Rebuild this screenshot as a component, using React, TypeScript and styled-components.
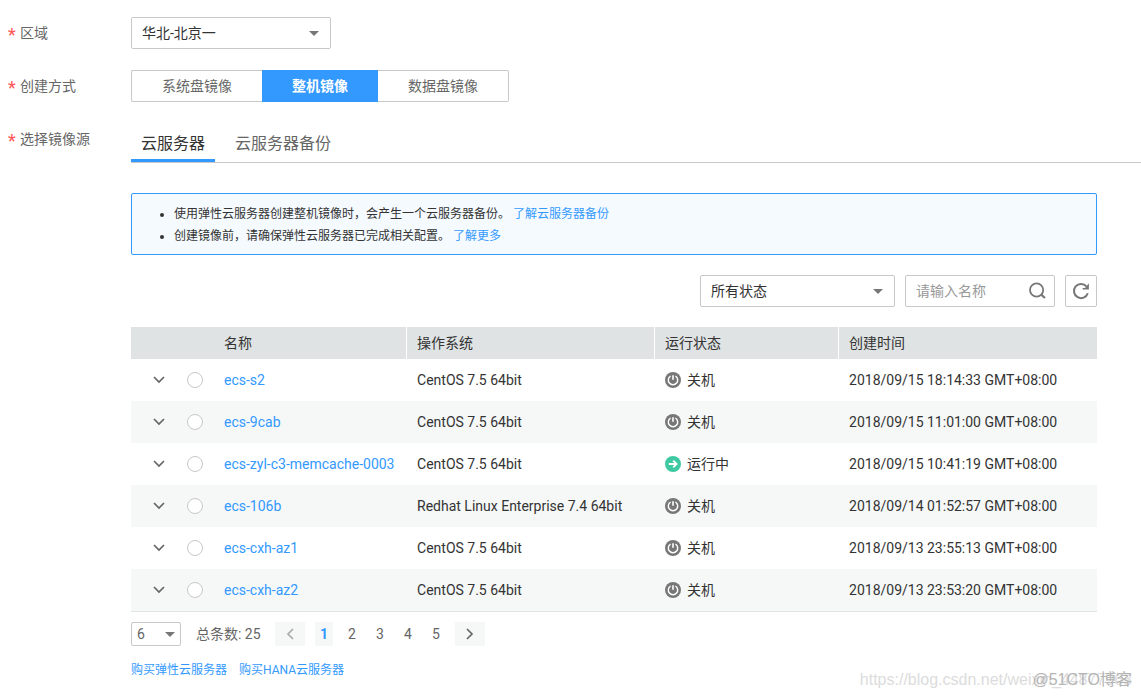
import React from "react";
import styled, { createGlobalStyle, css } from "styled-components";

const blue = "#3399ff";
const line = "#c8c8c8";

const GlobalStyle = createGlobalStyle`
  *, *::before, *::after { box-sizing: border-box; }
  body {
    margin: 0;
    background: #fff;
    color: #333;
    font-family: Roboto, "Noto Sans CJK SC", sans-serif;
    font-size: 14px;
    line-height: 20px;
  }
  button, input, select { font: inherit; color: inherit; margin: 0; }
  button { cursor: pointer; }
`;

const Page = styled.main`
  position: relative;
  display: flex;
  flex-direction: column;
  padding: 17px 0 18px 8px;
  overflow: hidden;
`;

const FormRow = styled.div<{ $gap?: number }>`
  display: grid;
  grid-template-columns: 123px minmax(0, 1fr);
  margin-bottom: ${(p) => p.$gap ?? 0}px;
`;

const labelStyle = css`
  display: flex;
  height: 32px;
  line-height: 32px;
  color: #666;
`;

const Label = styled.label`
  ${labelStyle}
`;

const GroupLabel = styled.span`
  ${labelStyle}
`;

const Star = styled.span`
  width: 12px;
  padding-top: 2px;
  font-size: 18px;
  color: #f55;
`;

const SelectBox = styled.div<{ $width: number; $small?: boolean }>`
  position: relative;
  width: ${(p) => p.$width}px;
  height: ${(p) => (p.$small ? 24 : 32)}px;
  color: ${(p) => (p.$small ? "#666" : "#333")};

  select {
    width: 100%;
    height: 100%;
    padding: 0 ${(p) => (p.$small ? 5 : 10)}px;
    border: 1px solid ${line};
    border-radius: 2px;
    background: #fff;
    appearance: none;
  }

  svg {
    position: absolute;
    top: 50%;
    right: ${(p) => (p.$small ? 6 : 12)}px;
    margin-top: -2px;
    pointer-events: none;
  }
`;

const Segments = styled.div`
  display: flex;
`;

const Segment = styled.button<{ $active?: boolean }>`
  height: 32px;
  padding: 0 30px;
  border: 1px solid ${line};
  border-radius: 0;
  background: #fff;
  color: #666;

  &:first-child { border-right: 0; border-radius: 2px 0 0 2px; }
  &:last-child { border-left: 0; border-radius: 0 2px 2px 0; }

  ${(p) =>
    p.$active &&
    css`
      border-width: 1px 0;
      border-color: ${blue};
      background: ${blue};
      color: #fff;
      font-weight: 700;
    `}
`;

const Source = styled.div`
  padding-top: 3px;
`;

const Tabs = styled.div`
  display: flex;
  gap: 10px;
  border-bottom: 1px solid ${line};
`;

const Tab = styled.button<{ $active?: boolean }>`
  height: 36px;
  padding: 2px 10px 0;
  border: 0;
  border-bottom: 3px solid ${(p) => (p.$active ? blue : "transparent")};
  background: none;
  color: ${(p) => (p.$active ? "#333" : "#666")};
  font-size: 16px;
  line-height: 31px;
`;

const Body = styled.div`
  padding: 30px 44px 0 0;
`;

const Notice = styled.ul`
  margin: 0 0 20px;
  padding: 9px 20px 7px 42px;
  border: 1px solid ${blue};
  border-radius: 2px;
  background: #f5faff;
  font-size: 12px;
  line-height: 22px;
`;

const Link = styled.a`
  color: ${blue};
  text-decoration: none;
`;

const NoticeLink = styled(Link)`
  margin-left: 3px;
`;

const Toolbar = styled.div`
  display: flex;
  justify-content: flex-end;
  gap: 10px;
  margin-bottom: 20px;
`;

const Search = styled.form`
  display: flex;
  align-items: center;
  width: 150px;
  height: 32px;
  padding: 0 8px 0 10px;
  border: 1px solid ${line};
  border-radius: 2px;

  input {
    flex: 1;
    min-width: 0;
    padding: 0;
    border: 0;
    outline: 0;
    background: none;
  }
  input::placeholder { color: #999; opacity: 1; }
`;

const IconButton = styled.button`
  display: flex;
  align-items: center;
  justify-content: center;
  padding: 0;
  border: 0;
  background: none;
`;

const RefreshButton = styled(IconButton)`
  width: 32px;
  height: 32px;
  border: 1px solid ${line};
  border-radius: 2px;
`;

const Table = styled.table`
  width: 100%;
  table-layout: fixed;
  border-collapse: separate;
  border-spacing: 0;
  border-bottom: 1px solid #dfe3e3;
  white-space: nowrap;

  th, td { padding: 0 0 0 10px; text-align: left; font-weight: 400; }
  th { height: 32px; background: #dfe3e3; }
  th:not(:last-child) { border-right: 1px solid #fff; }
  th:first-child { padding-left: 93px; }
  td { height: 42px; }
  td:nth-child(-n + 2) { padding: 0; }
  tbody tr:nth-child(even) { background: #f6f8f8; }
`;

const Col = styled.col<{ $width?: number }>`
  width: ${(p) => (p.$width ? `${p.$width}px` : "auto")};
`;

const Expand = styled(IconButton)`
  width: 100%;
  height: 24px;
  color: #666;
`;

const Radio = styled.input`
  display: block;
  width: 16px;
  height: 16px;
  border: 1px solid ${line};
  border-radius: 50%;
  background: #fff;
  appearance: none;

  &:checked { border: 5px solid ${blue}; }
`;

const Status = styled.span`
  display: flex;
  align-items: center;
  gap: 6px;
`;

const Pager = styled.nav`
  display: flex;
  align-items: center;
  gap: 10px;
  margin: 10px 0 14px;
  color: #666;
`;

const Total = styled.span`
  width: 74px;
  padding-left: 5px;
  white-space: nowrap;
`;

const PageButton = styled.button<{ $active?: boolean; $arrow?: boolean }>`
  display: flex;
  align-items: center;
  justify-content: center;
  width: ${(p) => (p.$arrow ? 30 : 18)}px;
  height: 24px;
  padding: 0;
  border: 0;
  background: ${(p) => (p.$active || p.$arrow ? "#f6f8f8" : "none")};
  color: ${(p) => (p.$active ? blue : "#666")};
  font-weight: ${(p) => (p.$active ? 700 : 400)};

  &:disabled { color: #aaa; }
`;

const Links = styled.div`
  display: flex;
  gap: 12px;
  font-size: 12px;
`;

const Watermark = styled.span<{ $front?: boolean }>`
  position: absolute;
  right: 9px;
  bottom: 8px;
  color: ${(p) => (p.$front ? "#b4b4b4" : "#dcdcdc")};
  font-size: 16px;
  line-height: 20px;
  font-family: "Liberation Sans", "Noto Sans CJK SC", sans-serif;
  pointer-events: none;
`;

const Caret = () => (
  <svg width="10" height="5" viewBox="0 0 10 5" aria-hidden="true">
    <path d="M0 0h10L5 5z" fill="#777" />
  </svg>
);

const Chevron = ({ d, w, h }: { d: string; w: number; h: number }) => (
  <svg width={w} height={h} viewBox={`0 0 ${w} ${h}`} fill="none" aria-hidden="true">
    <path d={d} stroke="currentColor" strokeWidth="1.7" />
  </svg>
);

const SearchIcon = () => (
  <svg width="18" height="18" viewBox="0 0 18 18" fill="none" stroke="#777" aria-hidden="true">
    <circle cx="8.6" cy="8" r="6.6" strokeWidth="1.8" />
    <path d="M13 12.4l4 3.6" strokeWidth="2.2" />
  </svg>
);

const RefreshIcon = () => (
  <svg width="18" height="18" viewBox="0 0 18 18" fill="none" aria-hidden="true">
    <path d="M14.6 4.6A7.1 7.1 0 1 0 15.8 11.2" stroke="#777" strokeWidth="2" />
    <path d="M16.9 1.2v6.2h-6.2v-1.4h2.4z" fill="#777" />
  </svg>
);

const StatusIcon = ({ running }: { running: boolean }) =>
  running ? (
    <svg width="16" height="16" viewBox="0 0 16 16" fill="none" aria-hidden="true">
      <circle cx="8" cy="8" r="8" fill="#3fc9a2" />
      <path d="M3.8 8h7.4M8.2 4.6L11.6 8l-3.4 3.4" stroke="#fff" strokeWidth="1.8" />
    </svg>
  ) : (
    <svg width="16" height="16" viewBox="0 0 16 16" fill="none" aria-hidden="true">
      <circle cx="8" cy="8" r="8" fill="#777" />
      <path d="M5.6 4A4.7 4.7 0 1 0 10.4 4" stroke="#fff" strokeWidth="1.4" />
      <path d="M8 3.2v4.6" stroke="#fff" strokeWidth="1.6" />
    </svg>
  );

const servers = [
  { name: "ecs-s2", os: "CentOS 7.5 64bit", running: false, time: "2018/09/15 18:14:33 GMT+08:00" },
  { name: "ecs-9cab", os: "CentOS 7.5 64bit", running: false, time: "2018/09/15 11:01:00 GMT+08:00" },
  { name: "ecs-zyl-c3-memcache-0003", os: "CentOS 7.5 64bit", running: true, time: "2018/09/15 10:41:19 GMT+08:00" },
  { name: "ecs-106b", os: "Redhat Linux Enterprise 7.4 64bit", running: false, time: "2018/09/14 01:52:57 GMT+08:00" },
  { name: "ecs-cxh-az1", os: "CentOS 7.5 64bit", running: false, time: "2018/09/13 23:55:13 GMT+08:00" },
  { name: "ecs-cxh-az2", os: "CentOS 7.5 64bit", running: false, time: "2018/09/13 23:53:20 GMT+08:00" },
];

export default function App() {
  return (
    <Page>
      <GlobalStyle />
      <FormRow $gap={21}>
        <Label htmlFor="region"><Star>*</Star>区域</Label>
        <SelectBox $width={200}>
          <select id="region"><option>华北-北京一</option></select>
          <Caret />
        </SelectBox>
      </FormRow>
      <FormRow $gap={21}>
        <GroupLabel id="method"><Star>*</Star>创建方式</GroupLabel>
        <Segments role="group" aria-labelledby="method">
          <Segment type="button">系统盘镜像</Segment>
          <Segment type="button" $active aria-pressed>整机镜像</Segment>
          <Segment type="button">数据盘镜像</Segment>
        </Segments>
      </FormRow>
      <FormRow>
        <GroupLabel id="source"><Star>*</Star>选择镜像源</GroupLabel>
        <Source>
          <Tabs role="tablist" aria-labelledby="source">
            <Tab type="button" role="tab" $active aria-selected>云服务器</Tab>
            <Tab type="button" role="tab">云服务器备份</Tab>
          </Tabs>
          <Body>
            <Notice>
              <li>使用弹性云服务器创建整机镜像时，会产生一个云服务器备份。<NoticeLink href="#backup">了解云服务器备份</NoticeLink></li>
              <li>创建镜像前，请确保弹性云服务器已完成相关配置。<NoticeLink href="#more">了解更多</NoticeLink></li>
            </Notice>
            <Toolbar>
              <SelectBox $width={195}>
                <select aria-label="运行状态"><option>所有状态</option></select>
                <Caret />
              </SelectBox>
              <Search onSubmit={(e) => e.preventDefault()}>
                <input type="text" aria-label="名称" placeholder="请输入名称" />
                <IconButton aria-label="搜索"><SearchIcon /></IconButton>
              </Search>
              <RefreshButton type="button" aria-label="刷新"><RefreshIcon /></RefreshButton>
            </Toolbar>
            <Table>
              <colgroup>
                <Col $width={56} />
                <Col $width={27} />
                <Col $width={193} />
                <Col $width={248} />
                <Col $width={184} />
                <Col />
              </colgroup>
              <thead>
                <tr>
                  <th colSpan={3}>名称</th>
                  <th>操作系统</th>
                  <th>运行状态</th>
                  <th>创建时间</th>
                </tr>
              </thead>
              <tbody>
                {servers.map((s) => (
                  <tr key={s.name}>
                    <td>
                      <Expand type="button" aria-label={`展开 ${s.name}`}>
                        <Chevron w={12} h={8} d="M1 1l5 5 5-5" />
                      </Expand>
                    </td>
                    <td><Radio type="radio" name="server" aria-label={s.name} /></td>
                    <td><Link href={`#${s.name}`}>{s.name}</Link></td>
                    <td>{s.os}</td>
                    <td>
                      <Status><StatusIcon running={s.running} />{s.running ? "运行中" : "关机"}</Status>
                    </td>
                    <td>{s.time}</td>
                  </tr>
                ))}
              </tbody>
            </Table>
            <Pager aria-label="分页">
              <SelectBox $width={50} $small>
                <select aria-label="每页条数"><option>6</option></select>
                <Caret />
              </SelectBox>
              <Total>总条数: 25</Total>
              <PageButton type="button" $arrow disabled aria-label="上一页">
                <Chevron w={8} h={12} d="M7 1L2 6l5 5" />
              </PageButton>
              {[1, 2, 3, 4, 5].map((n) => (
                <PageButton key={n} type="button" $active={n === 1}>{n}</PageButton>
              ))}
              <PageButton type="button" $arrow aria-label="下一页">
                <Chevron w={8} h={12} d="M1 1l5 5-5 5" />
              </PageButton>
            </Pager>
            <Links>
              <Link href="#buy-ecs">购买弹性云服务器</Link>
              <Link href="#buy-hana">购买HANA云服务器</Link>
            </Links>
          </Body>
        </Source>
      </FormRow>
      <Watermark>https://blog.csdn.net/weixin_44877963</Watermark>
      <Watermark $front>@51CTO博客</Watermark>
    </Page>
  );
}
